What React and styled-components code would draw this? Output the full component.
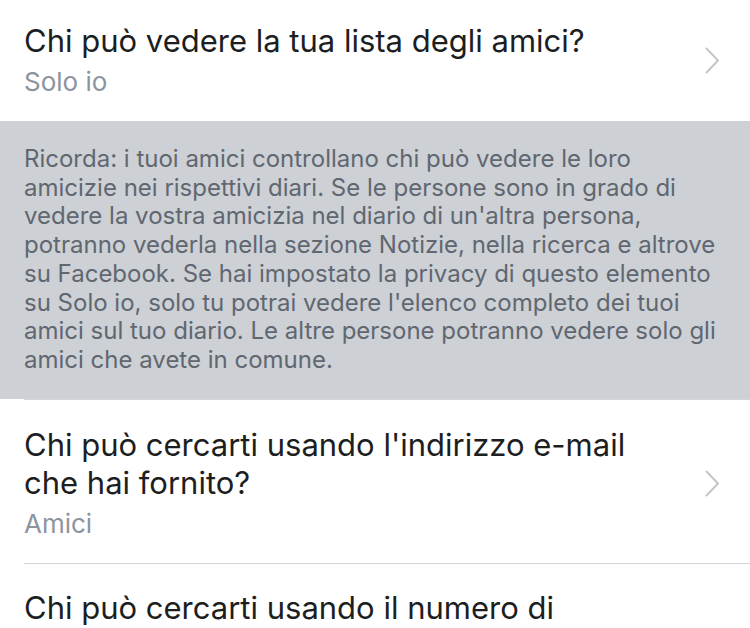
import styled, { createGlobalStyle } from "styled-components";

const GlobalStyle = createGlobalStyle`
  body {
    margin: 0;
    background: #ffffff;
    font-family: Inter, Roboto, "Noto Sans", sans-serif;
    -webkit-font-smoothing: antialiased;
  }
`;

const noteLines = [
  "Ricorda: i tuoi amici controllano chi può vedere le loro",
  "amicizie nei rispettivi diari. Se le persone sono in grado di",
  "vedere la vostra amicizia nel diario di un'altra persona,",
  "potranno vederla nella sezione Notizie, nella ricerca e altrove",
  "su Facebook. Se hai impostato la privacy di questo elemento",
  "su Solo io, solo tu potrai vedere l'elenco completo dei tuoi",
  "amici sul tuo diario. Le altre persone potranno vedere solo gli",
  "amici che avete in comune.",
];

const Chevron = () => (
  <svg width="15" height="27" viewBox="0 0 15 27" fill="none">
    <path d="M1.5 1.5 L13 13.5 L1.5 25.5" stroke="#c4c6cb" strokeWidth="2" strokeLinecap="round" strokeLinejoin="round" />
  </svg>
);

const SettingRow = ({ title, value, first }) => (
  <Row $first={first}>
    <RowText>
      <Title>{title}</Title>
      {value && <Value>{value}</Value>}
    </RowText>
    {value && (
      <Arrow>
        <Chevron />
      </Arrow>
    )}
  </Row>
);

const App = () => {
  return (
    <Wrapper>
      <GlobalStyle />
      <SettingRow first title="Chi può vedere la tua lista degli amici?" value="Solo io" />
      <Note>
        {noteLines.map((line, i) => (
          <NoteLine key={i}>{line}</NoteLine>
        ))}
      </Note>
      <SettingRow
        title={
          <>
            Chi può cercarti usando l'indirizzo e-mail
            <br />
            che hai fornito?
          </>
        }
        value="Amici"
      />
      <SettingRow title="Chi può cercarti usando il numero di" />
    </Wrapper>
  );
};

const Wrapper = styled.div`
  width: 750px;
  height: 628px;
  overflow: hidden;
  background: #ffffff;
`;

const Row = styled.div`
  display: flex;
  align-items: center;
  justify-content: space-between;
  margin-left: 24px;
  padding: ${(p) => (p.$first ? "22px" : "26px")} 30px 22px 0;
  border-top: ${(p) => (p.$first ? "none" : "1px solid #d3d5d9")};
  & + & {
    padding-top: 25px;
  }
`;

const RowText = styled.div`
  display: flex;
  flex-direction: column;
  gap: 5px;
`;

const Title = styled.div`
  font-size: 31px;
  line-height: 38px;
  color: #1c1e21;
`;

const Value = styled.div`
  font-size: 26px;
  line-height: 34px;
  color: #8d949e;
`;

const Arrow = styled.div`
  display: flex;
  align-items: center;
`;

const Note = styled.div`
  background: #cdd0d5;
  padding: 24px 24px 0 24px;
  height: 278px;
  box-sizing: border-box;
  font-size: 24px;
  line-height: 28.7px;
  color: #606770;
`;

const NoteLine = styled.div`
  white-space: nowrap;
`;

export default App;
